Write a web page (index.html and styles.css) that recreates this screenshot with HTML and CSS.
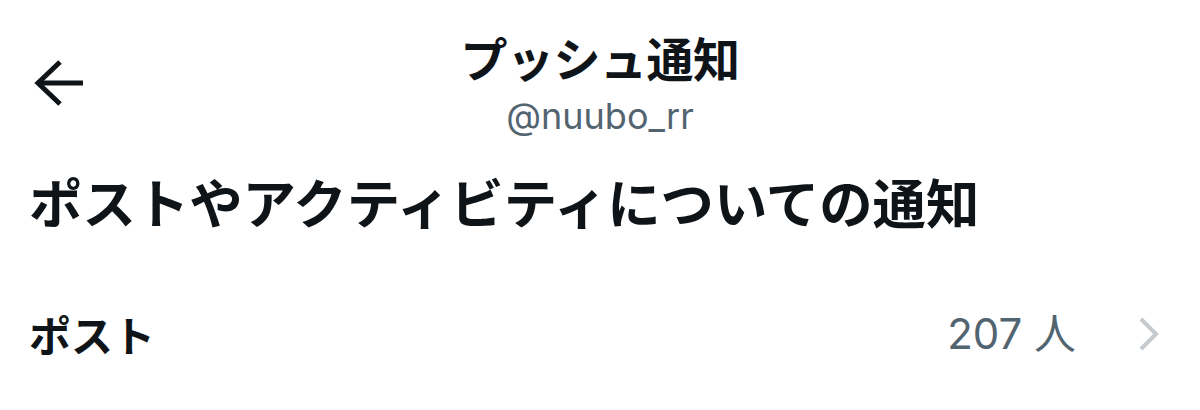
FILE: index.html
```html
<!DOCTYPE html>
<html lang="ja">
<head>
<meta charset="utf-8">
<title>プッシュ通知</title>
<link rel="stylesheet" href="styles.css">
</head>
<body>
<div class="screen">
  <header class="topbar">
    <div class="topbar-side">
      <button class="back" aria-label="戻る">
        <svg width="50" height="46" viewBox="0 0 50 46" fill="none" stroke="#0f1419" stroke-width="5" stroke-linecap="butt" stroke-linejoin="miter">
          <path d="M27 2 L5 23 L27 44"/>
          <path d="M5 23 H50"/>
        </svg>
      </button>
    </div>
    <div class="topbar-title">
      <h1 class="title">プッシュ通知</h1>
      <div class="handle">@nuubo_rr</div>
    </div>
    <div class="topbar-side"></div>
  </header>

  <h2 class="section-title">ポストやアクティビティについての通知</h2>

  <a class="row" href="#">
    <span class="row-label">ポスト</span>
    <span class="row-value">207 人</span>
    <svg class="chevron" width="22" height="34" viewBox="0 0 22 34" fill="none" stroke="#c4cad0" stroke-width="4">
      <path d="M3 2 L18 17 L3 32"/>
    </svg>
  </a>
</div>
</body>
</html>
```

FILE: styles.css
```css
* {
  box-sizing: border-box;
}

html, body {
  margin: 0;
  padding: 0;
  background: #ffffff;
}

body {
  font-family: "Noto Sans CJK JP", "Noto Sans", sans-serif;
  color: #0f1419;
  width: 1200px;
  height: 410px;
  overflow: hidden;
}

.screen {
  display: flex;
  flex-direction: column;
}

.topbar {
  display: grid;
  grid-template-columns: 1fr auto 1fr;
  align-items: center;
  padding-top: 27px;
}

.topbar-side {
  padding-left: 33px;
}

.back {
  display: flex;
  align-items: center;
  background: none;
  border: 0;
  padding: 0;
  margin: 0;
}

.topbar-title {
  display: flex;
  flex-direction: column;
  align-items: center;
}

.title {
  margin: 0;
  font-size: 47px;
  line-height: 60px;
  font-weight: 700;
  letter-spacing: -0.5px;
}

.handle {
  font-family: "Inter", "Noto Sans", sans-serif;
  font-size: 36px;
  line-height: 44px;
  color: #536471;
  margin-top: 7px;
}

.section-title {
  margin: 28px 0 0 29px;
  font-size: 53.4px;
  line-height: 70px;
  font-weight: 700;
}

.row {
  display: flex;
  align-items: center;
  margin-top: 70px;
  padding: 0 40px 0 29px;
  text-decoration: none;
  color: inherit;
}

.row-label {
  font-size: 42px;
  line-height: 56px;
  font-weight: 700;
  flex: 1;
}

.row-value {
  font-family: "Inter", "Noto Sans CJK JP", sans-serif;
  font-size: 42px;
  line-height: 56px;
  color: #536471;
  margin-right: 62px;
}

.chevron {
  display: block;
}
```
